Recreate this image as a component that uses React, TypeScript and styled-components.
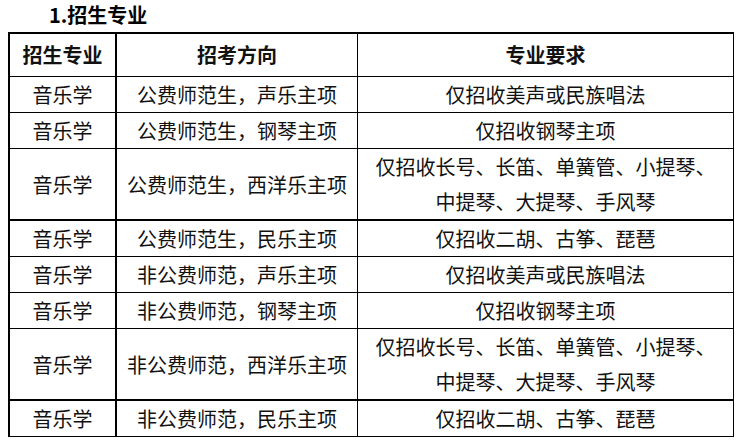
import React from "react";
import styled, { createGlobalStyle } from "styled-components";

const GlobalStyle = createGlobalStyle`
  html, body {
    margin: 0;
    padding: 0;
    background: #ffffff;
  }
  body {
    font-family: "Microsoft YaHei", "Noto Sans CJK SC", "Noto Sans", sans-serif;
    color: #000000;
  }
`;

const Page = styled.div`
  width: 744px;
  height: 442px;
  overflow: hidden;
  display: flex;
  flex-direction: column;
  padding-left: 8px;
  box-sizing: border-box;
`;

const Title = styled.h2`
  margin: 0;
  padding-left: 41px;
  height: 32px;
  line-height: 30px;
  font-size: 20px;
  font-weight: 700;
  color: #000;
`;

const Table = styled.table`
  width: 724px;
  border-collapse: separate;
  border-spacing: 0;
  table-layout: fixed;
  border-top: 2px solid #000;
  border-left: 2px solid #000;
`;

const Col = styled.col<{ $w: number }>`
  width: ${(p) => p.$w}px;
`;

const HeadCell = styled.th<{ $thick?: boolean }>`
  padding: 0;
  height: 42px;
  line-height: 42px;
  font-size: 20px;
  font-weight: 700;
  text-align: center;
  border-right: ${(p) => (p.$thick ? 2 : 1)}px solid #000;
  border-bottom: 1px solid #000;
  color: #111;
`;

const Cell = styled.td<{ $thick?: boolean; $heavyBottom?: boolean }>`
  padding: 0;
  line-height: 35px;
  font-size: 20px;
  font-weight: 400;
  text-align: center;
  vertical-align: middle;
  white-space: pre-line;
  border-right: ${(p) => (p.$thick ? 2 : 1)}px solid #000;
  border-bottom: ${(p) => (p.$heavyBottom ? 2 : 1)}px solid #000;
  color: #111;
`;

type Row = { major: string; dir: string; req: string; heavy?: boolean };

const rows: Row[] = [
  { major: "音乐学", dir: "公费师范生，声乐主项", req: "仅招收美声或民族唱法" },
  { major: "音乐学", dir: "公费师范生，钢琴主项", req: "仅招收钢琴主项" },
  {
    major: "音乐学",
    dir: "公费师范生，西洋乐主项",
    req: "仅招收长号、长笛、单簧管、小提琴、\n中提琴、大提琴、手风琴",
    heavy: true,
  },
  { major: "音乐学", dir: "公费师范生，民乐主项", req: "仅招收二胡、古筝、琵琶" },
  { major: "音乐学", dir: "非公费师范，声乐主项", req: "仅招收美声或民族唱法" },
  { major: "音乐学", dir: "非公费师范，钢琴主项", req: "仅招收钢琴主项" },
  {
    major: "音乐学",
    dir: "非公费师范，西洋乐主项",
    req: "仅招收长号、长笛、单簧管、小提琴、\n中提琴、大提琴、手风琴",
    heavy: true,
  },
  { major: "音乐学", dir: "非公费师范，民乐主项", req: "仅招收二胡、古筝、琵琶" },
];

export default function App() {
  return (
    <>
      <GlobalStyle />
      <Page>
        <Title>1.招生专业</Title>
        <Table>
          <colgroup>
            <Col $w={107} />
            <Col $w={241} />
            <Col $w={376} />
          </colgroup>
          <thead>
            <tr>
              <HeadCell $thick>招生专业</HeadCell>
              <HeadCell>招考方向</HeadCell>
              <HeadCell>专业要求</HeadCell>
            </tr>
          </thead>
          <tbody>
            {rows.map((r, i) => (
              <tr key={i}>
                <Cell $thick $heavyBottom={r.heavy}>
                  {r.major}
                </Cell>
                <Cell $heavyBottom={r.heavy}>{r.dir}</Cell>
                <Cell $heavyBottom={r.heavy}>{r.req}</Cell>
              </tr>
            ))}
          </tbody>
        </Table>
      </Page>
    </>
  );
}
